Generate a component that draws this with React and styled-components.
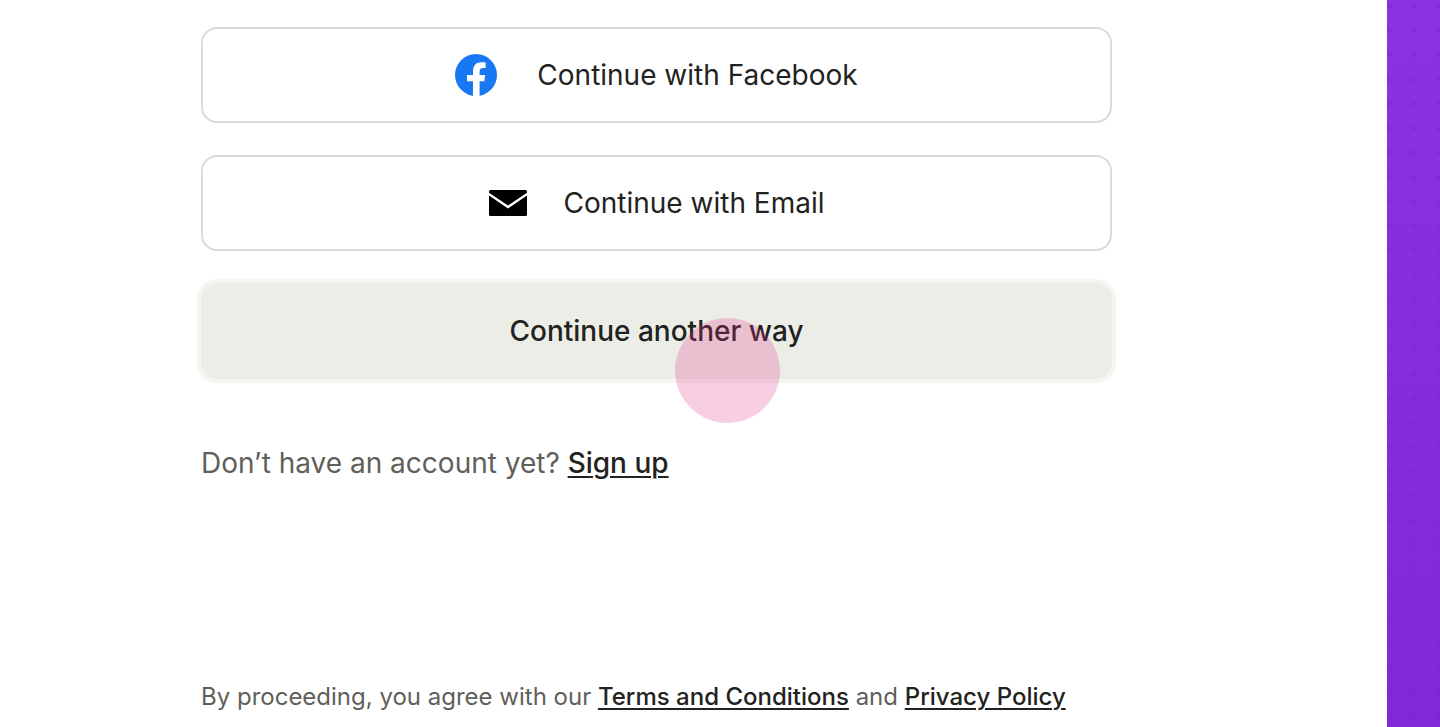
import React from 'react';
import styled, {createGlobalStyle} from 'styled-components';

const App = () => {
    return (
        <Page>
            <GlobalStyle />
            <Panel>
                <Options>
                    <OptionButton type="button" $gap="40px">
                        <FacebookIcon />
                        Continue with Facebook
                    </OptionButton>
                    <OptionButton type="button" $gap="37px">
                        <EmailIcon />
                        Continue with Email
                    </OptionButton>
                    <OtherButton type="button">Continue another way</OtherButton>
                    <Pointer />
                </Options>
                <SignUp>
                    Don’t have an account yet? <TextLink href="#signup">Sign up</TextLink>
                </SignUp>
                <Legal>
                    By proceeding, you agree with our{' '}
                    <TextLink href="#terms">Terms and Conditions</TextLink> and{' '}
                    <TextLink href="#privacy">Privacy Policy</TextLink>
                </Legal>
            </Panel>
            <Artwork />
        </Page>
    );
}

const FacebookIcon = () => (
    <svg width="42" height="42" viewBox="0 0 42 42" aria-hidden="true">
        <circle cx="21" cy="21" r="21" fill="#1877f2" />
        <path
            fill="#fff"
            d="M18 42V27.3h-6V21h6v-3.6c0-6 3.2-9.2 8.6-9.2 1.6 0 3 .1 4 .3v5.6h-2.4c-2.8 0-3.6 1.4-3.6 3.6V21h5.6l-.9 6.3h-4.7V42Z"
        />
    </svg>
)

const EmailIcon = () => (
    <svg width="38" height="26" viewBox="0 0 38 26" aria-hidden="true">
        <path d="M1.5 0h35A1.5 1.5 0 0 1 38 1.5v1.3L19 15.4 0 2.8V1.5A1.5 1.5 0 0 1 1.5 0Z" />
        <path d="M0 5.5 19 18.4 38 5.5v19a1.5 1.5 0 0 1-1.5 1.5h-35A1.5 1.5 0 0 1 0 24.5Z" />
    </svg>
)

const GlobalStyle = createGlobalStyle`
    *{
        box-sizing: border-box;
    }

    body{
        margin: 0;
        background-color: #fff;
        color: #222320;
        font-family: Inter, sans-serif;
    }
`;

const Page = styled.div`
    display: flex;
    min-height: 100vh;
`;

const Panel = styled.main`
    flex: 1;
    min-width: 0;
    display: flex;
    flex-direction: column;
    padding: 27px 275px 10px 201px;
`;

const Options = styled.div`
    position: relative;
    display: flex;
    flex-direction: column;
    gap: 32px;
`;

const Button = styled.button`
    display: flex;
    justify-content: center;
    align-items: center;
    width: 100%;
    height: 96px;
    padding: 0 24px;
    border-radius: 16px;
    color: #222320;
    font-family: inherit;
    font-size: 28px;
    line-height: 40px;
    cursor: pointer;
`;

const OptionButton = styled(Button)`
    gap: ${({$gap}) => $gap};
    border: 2px solid #dadbd5;
    background-color: #fff;
`;

const OtherButton = styled(Button)`
    border: 0;
    background-color: #ecede7;
    box-shadow: 0 0 0 4px #f5f6f1;
    font-weight: 500;
`;

const Pointer = styled.span`
    position: absolute;
    left: 474px;
    bottom: -44px;
    width: 105px;
    height: 105px;
    border-radius: 50%;
    background-color: rgba(225, 52, 140, 0.24);
    pointer-events: none;
`;

const SignUp = styled.p`
    margin: 64px 0 0;
    color: #5f605a;
    font-size: 28px;
    line-height: 40px;
`;

const Legal = styled.p`
    margin: auto 0 0;
    color: #5f605a;
    font-size: 24px;
    line-height: 40px;
`;

const TextLink = styled.a`
    color: #222320;
    font-weight: 500;
    text-decoration: underline;
    text-decoration-thickness: 2px;
    text-underline-offset: 3px;
`;

/* purple strip with a faint grid of square dots, two by two in each tile */
const Artwork = styled.aside`
    --dot: conic-gradient(from 90deg at 44px 44px, rgba(110, 30, 205, 0.2) 90deg, transparent 0);
    flex: 0 0 53px;
    background:
        var(--dot) 5px 8px / 49px 49px,
        var(--dot) 29px 8px / 49px 49px,
        var(--dot) 5px 33px / 49px 49px,
        var(--dot) 29px 33px / 49px 49px,
        linear-gradient(#8c32e0, #8128d7);
`;

export default App;
